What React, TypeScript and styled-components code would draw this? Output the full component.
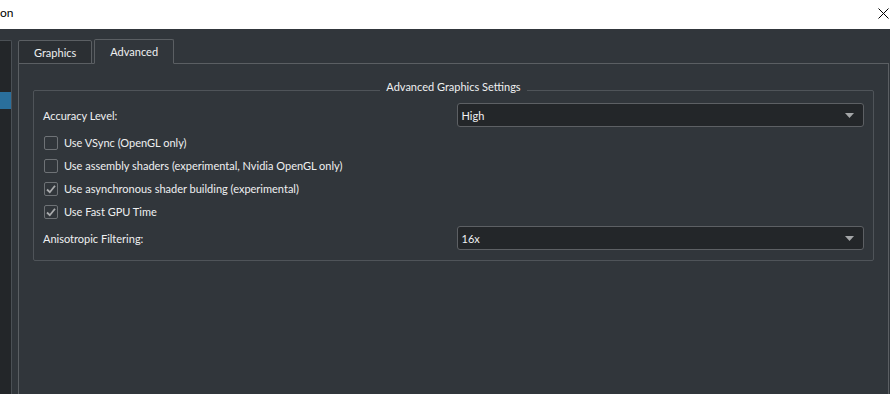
import React from "react";
import styled, { createGlobalStyle } from "styled-components";

const GlobalStyle = createGlobalStyle`
	html, body {
		margin: 0;
		padding: 0;
		width: 890px;
		height: 394px;
		overflow: hidden;
		background: #31363b;
	}
	body {
		font-family: Lato, "Liberation Sans", sans-serif;
		font-size: 11px;
	}
`;

const Window = styled.div`
	display: flex;
	flex-direction: column;
	width: 890px;
	height: 394px;
`;

const TitleBar = styled.div`
	display: flex;
	align-items: center;
	justify-content: space-between;
	height: 29px;
	background: #ffffff;
	color: #000000;
	font-size: 12px;
	flex-shrink: 0;
`;

const TitleText = styled.span`
	margin-top: -4px;
`;

const CloseButton = styled.div`
	display: flex;
	align-items: center;
	justify-content: center;
	width: 16px;
	height: 29px;
	margin-right: -1px;
	margin-top: -2px;
`;

const Body = styled.div`
	flex: 1;
	display: flex;
	gap: 6px;
	padding-top: 11px;
	min-height: 0;
`;

const SideList = styled.div`
	width: 11px;
	background: #232629;
	border: 1px solid #4b5055;
	border-left: none;
	border-bottom: none;
	border-top-right-radius: 2px;
	padding-top: 51px;
	flex-shrink: 0;
`;

const SideItem = styled.div<{ $selected?: boolean }>`
	height: 17px;
	background: ${(p) => (p.$selected ? "#2a6f9c" : "transparent")};
`;

const Tabs = styled.div`
	flex: 1;
	display: flex;
	flex-direction: column;
	margin-right: 1px;
`;

const TabBar = styled.div`
	display: flex;
	align-items: flex-end;
	gap: 2px;
	height: 24px;
	position: relative;
	z-index: 1;
	margin-bottom: -1px;
`;

const Tab = styled.div<{ $active?: boolean }>`
	box-sizing: border-box;
	height: ${(p) => (p.$active ? "25px" : "24px")};
	padding: 0 15px;
	display: flex;
	align-items: center;
	padding-bottom: ${(p) => (p.$active ? "1px" : "0")};
	color: #eff0f1;
	background: ${(p) => (p.$active ? "#31363b" : "#2b2f33")};
	border: 1px solid #5b5f63;
	border-bottom: ${(p) => (p.$active ? "1px solid #31363b" : "1px solid #5b5f63")};
	border-top-left-radius: 2px;
	border-top-right-radius: 2px;
`;

const Pane = styled.div`
	flex: 1;
	border: 1px solid #5b5f63;
	border-bottom: none;
	padding: 16px 14px 0 14px;
`;

const Group = styled.fieldset`
	margin: 0;
	padding: 3px 9px 10px 9px;
	border: 1px solid #4f5459;
	border-radius: 2px;
	display: flex;
	flex-direction: column;
`;

/* extra bottom padding lifts the caption above the frame line */
const Legend = styled.legend`
	margin: 0 auto;
	padding: 0 6px 6px 6px;
	line-height: 14px;
	color: #eff0f1;
`;

const FieldRow = styled.div<{ $mt?: number }>`
	display: grid;
	grid-template-columns: 1fr 1fr;
	column-gap: 6px;
	align-items: center;
	margin-top: ${(p) => p.$mt ?? 0}px;
`;

const Label = styled.span`
	color: #eff0f1;
`;

const Combo = styled.div`
	box-sizing: border-box;
	height: 24px;
	display: flex;
	align-items: center;
	justify-content: space-between;
	padding: 0 9px 0 4px;
	background: #232629;
	border: 1px solid #5d6064;
	border-radius: 3px;
	color: #eff0f1;
`;

const CheckRow = styled.label<{ $mt?: number }>`
	display: flex;
	align-items: center;
	gap: 6px;
	height: 17px;
	margin-top: ${(p) => p.$mt ?? 6}px;
	padding-left: 1px;
	color: #eff0f1;
`;

const Box = styled.span`
	box-sizing: border-box;
	width: 14px;
	height: 14px;
	border: 1px solid #6e7276;
	border-radius: 2px;
	display: flex;
	align-items: center;
	justify-content: center;
	flex-shrink: 0;
`;

function Arrow() {
	return (
		<svg width="9" height="5" viewBox="0 0 9 5">
			<path d="M0 0 L9 0 L4.5 5 Z" fill="#a4a6a8" />
		</svg>
	);
}

function Check(props: { label: string; checked?: boolean; mt?: number }) {
	return (
		<CheckRow $mt={props.mt}>
			<Box>
				{props.checked && (
					<svg width="12" height="12" viewBox="0 0 12 12">
						<path
							d="M2 6.5 L4.8 9.2 L10 2.8"
							fill="none"
							stroke="#a9abad"
							strokeWidth="1.8"
						/>
					</svg>
				)}
			</Box>
			{props.label}
		</CheckRow>
	);
}

export default function App() {
	return (
		<Window>
			<GlobalStyle />
			<TitleBar>
				<TitleText>on</TitleText>
				<CloseButton>
					<svg width="11" height="11" viewBox="0 0 11 11">
						<path d="M0.5 0.5 L10.5 10.5 M10.5 0.5 L0.5 10.5" stroke="#000" strokeWidth="1" />
					</svg>
				</CloseButton>
			</TitleBar>
			<Body>
				<SideList>
					<SideItem $selected />
				</SideList>
				<Tabs>
					<TabBar>
						<Tab>Graphics</Tab>
						<Tab $active>Advanced</Tab>
					</TabBar>
					<Pane>
						<Group>
							<Legend>Advanced Graphics Settings</Legend>
							<FieldRow>
								<Label>Accuracy Level:</Label>
								<Combo>
									High
									<Arrow />
								</Combo>
							</FieldRow>
							<Check label="Use VSync (OpenGL only)" mt={7} />
							<Check label="Use assembly shaders (experimental, Nvidia OpenGL only)" />
							<Check label="Use asynchronous shader building (experimental)" checked />
							<Check label="Use Fast GPU Time" checked />
							<FieldRow $mt={6}>
								<Label>Anisotropic Filtering:</Label>
								<Combo>
									16x
									<Arrow />
								</Combo>
							</FieldRow>
						</Group>
					</Pane>
				</Tabs>
			</Body>
		</Window>
	);
}
